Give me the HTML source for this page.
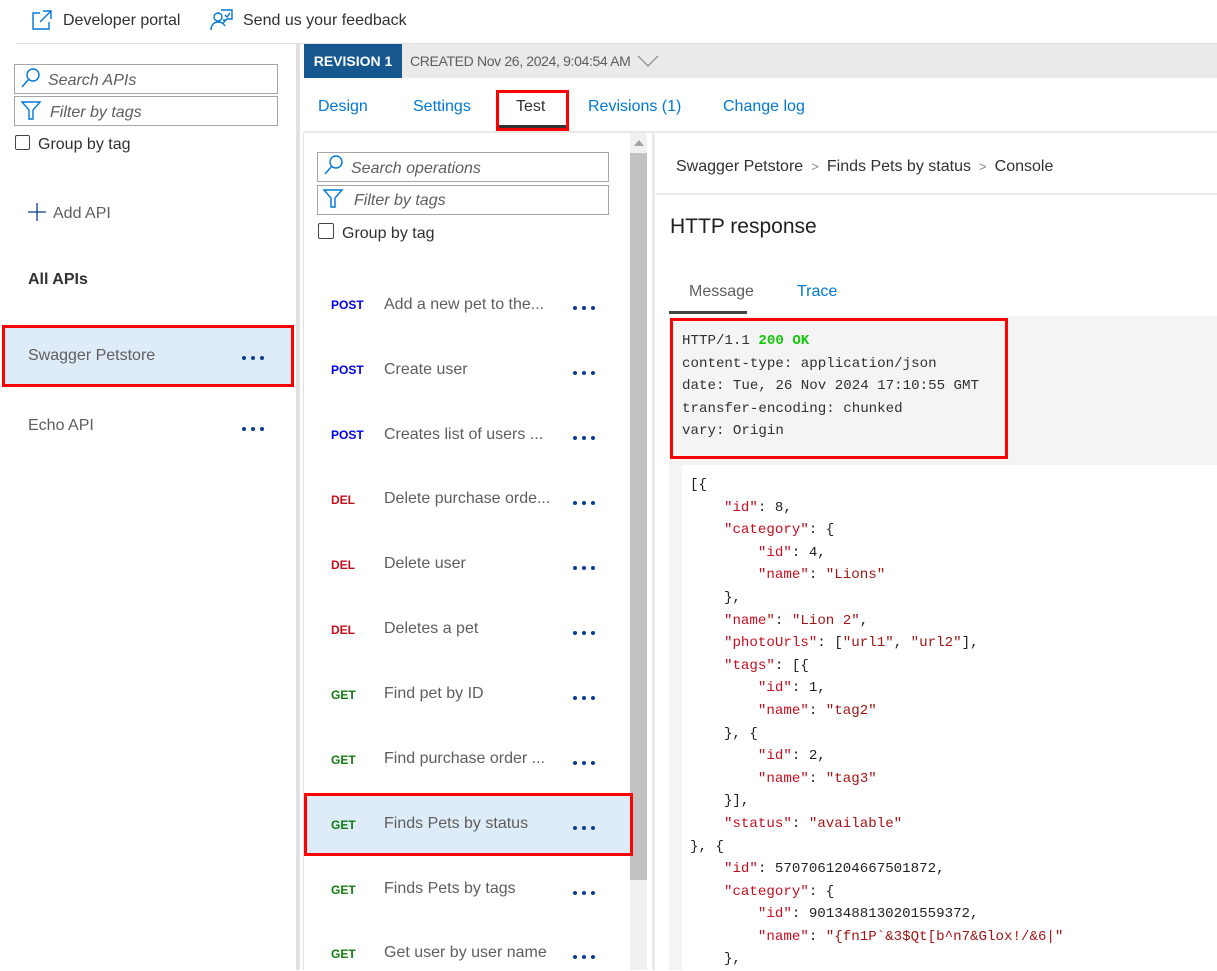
<!DOCTYPE html>
<html><head><meta charset="utf-8"><style>
*{margin:0;padding:0;box-sizing:border-box}
body{width:1217px;height:970px;overflow:hidden;background:#fff;font-family:"Liberation Sans",sans-serif;color:#323130;position:relative}
.a{position:absolute;white-space:nowrap}
.box{position:absolute;border:1px solid #a6a6a6;background:#fff}
.it{font-style:italic;color:#605e5c;font-size:16px}
.lnk{color:#0078d4;font-size:16px}
.dots{position:absolute;width:22px;height:4px;display:flex;justify-content:space-between}
.dots i{display:block;width:4px;height:4px;border-radius:50%;background:#0b3d91}
.m{position:absolute;font-size:12px;font-weight:bold}
.op{position:absolute;font-size:16px;color:#605e5c}
.mono{font-family:"Liberation Mono",monospace;font-size:14.15px;line-height:22.6px;white-space:pre}
.k{color:#c50f1f}
.s{color:#a31515}
</style></head><body>
<!-- top bar -->
<svg class="a" style="left:31px;top:9px" width="22" height="22" viewBox="0 0 22 22" fill="none" stroke="#0078d4" stroke-width="1.4"><path d="M9 4H2v16h16v-7"/><path d="M12 2h8v8M20 2L9 13"/></svg>
<div class="a" style="left:63px;top:12px;font-size:16px">Developer portal</div>
<svg class="a" style="left:210px;top:8px" width="24" height="24" viewBox="0 0 24 24" fill="none" stroke="#0078d4" stroke-width="1.4"><circle cx="8" cy="9" r="4"/><path d="M1 22c0-5 3-8 7-8s6 2 7 4"/><path d="M11 2h11v9h-5l-3 3v-3"/><path d="M15 7l2 2 3-4"/></svg>
<div class="a" style="left:243px;top:12px;font-size:16px">Send us your feedback</div>
<div class="a" style="left:16px;top:43px;width:1201px;height:1px;background:#e1dfdd"></div>

<!-- left pane -->
<div class="box" style="left:14px;top:64px;width:264px;height:30px"></div>
<svg class="a" style="left:20px;top:67px" width="22" height="22" viewBox="0 0 22 22" fill="none" stroke="#0078d4" stroke-width="1.4"><circle cx="13" cy="8" r="6"/><path d="M9 12L2 20"/></svg>
<div class="a it" style="left:48px;top:72px">Search APIs</div>
<div class="box" style="left:14px;top:96px;width:264px;height:30px"></div>
<svg class="a" style="left:20px;top:99px" width="22" height="22" viewBox="0 0 22 22" fill="none" stroke="#0078d4" stroke-width="1.4"><path d="M2 3h18l-7 8v9h-4v-9z"/></svg>
<div class="a it" style="left:50px;top:104px">Filter by tags</div>
<div class="a" style="left:15px;top:135px;width:15px;height:15px;border:1px solid #444;border-radius:2px"></div>
<div class="a" style="left:38px;top:136px;font-size:16px">Group by tag</div>
<svg class="a" style="left:27px;top:202px" width="20" height="20" viewBox="0 0 20 20" stroke="#0b3d91" stroke-width="1.3"><path d="M10 1v18M1 10h18"/></svg>
<div class="a" style="left:53px;top:205px;font-size:16px;color:#605e5c">Add API</div>
<div class="a" style="left:28px;top:271px;font-size:16px;font-weight:bold;color:#323130">All APIs</div>
<div class="a" style="left:2px;top:325px;width:292px;height:62px;background:#deecf9;border:3px solid #f00"></div>
<div class="a" style="left:28px;top:347px;font-size:16px;color:#605e5c">Swagger Petstore</div>
<div class="dots" style="left:242px;top:356px"><i></i><i></i><i></i></div>
<div class="a" style="left:28px;top:417px;font-size:16px;color:#605e5c">Echo API</div>
<div class="dots" style="left:242px;top:427px"><i></i><i></i><i></i></div>
<div class="a" style="left:296px;top:44px;width:4px;height:926px;background:#e1e1e1"></div>

<!-- revision bar -->
<div class="a" style="left:304px;top:44px;width:913px;height:34px;background:#eaeaea"></div>
<div class="a" style="left:304px;top:44px;width:98px;height:34px;background:#16578f;color:#fff;font-weight:bold;font-size:14px;line-height:34px;text-align:center">REVISION 1</div>
<div class="a" style="left:410px;top:53px;font-size:14px;color:#605e5c;letter-spacing:-0.35px">CREATED Nov 26, 2024, 9:04:54 AM</div>
<svg class="a" style="left:637px;top:54px" width="22" height="14" viewBox="0 0 22 14" fill="none" stroke="#8a8886" stroke-width="1.2"><path d="M1 2l10 10L21 2"/></svg>

<!-- tabs -->
<div class="a lnk" style="left:318px;top:98px">Design</div>
<div class="a lnk" style="left:413px;top:98px">Settings</div>
<div class="a" style="left:516px;top:98px;font-size:16px">Test</div>
<div class="a" style="left:498px;top:125px;width:68px;height:3px;background:#333"></div>
<div class="a" style="left:496px;top:90px;width:73px;height:41px;border:3px solid #f00"></div>
<div class="a lnk" style="left:588px;top:98px">Revisions (1)</div>
<div class="a lnk" style="left:723px;top:98px">Change log</div>
<div class="a" style="left:304px;top:131px;width:913px;height:2px;background:#e8e8e8"></div>

<!-- middle pane -->
<div class="a" style="left:303px;top:133px;width:1px;height:837px;background:#e1e1e1"></div>
<div class="a" style="left:630px;top:133px;width:17px;height:837px;background:#f1f1f1"></div>
<div class="a" style="left:634px;top:140px;width:0;height:0;border-left:5px solid transparent;border-right:5px solid transparent;border-bottom:6px solid #a3a3a3"></div>
<div class="a" style="left:630px;top:153px;width:17px;height:727px;background:#c1c1c1"></div>
<div class="a" style="left:652px;top:133px;width:3px;height:837px;background:#eaeaea"></div>

<div class="box" style="left:317px;top:152px;width:292px;height:30px"></div>
<svg class="a" style="left:323px;top:154px" width="22" height="22" viewBox="0 0 22 22" fill="none" stroke="#0078d4" stroke-width="1.4"><circle cx="13" cy="8" r="6"/><path d="M9 12L2 20"/></svg>
<div class="a it" style="left:351px;top:160px">Search operations</div>
<div class="box" style="left:317px;top:185px;width:292px;height:30px"></div>
<svg class="a" style="left:322px;top:187px" width="22" height="22" viewBox="0 0 22 22" fill="none" stroke="#0078d4" stroke-width="1.4"><path d="M2 3h18l-7 8v9h-4v-9z"/></svg>
<div class="a it" style="left:354px;top:192px">Filter by tags</div>
<div class="a" style="left:318px;top:223px;width:16px;height:16px;border:1px solid #444;border-radius:2px"></div>
<div class="a" style="left:342px;top:225px;font-size:16px">Group by tag</div>

<div class="a" style="left:304px;top:793px;width:329px;height:63px;background:#deecf9;border:3px solid #f00"></div>

<div class="m" style="left:331px;top:298px;color:#0000ee">POST</div><div class="op" style="left:384px;top:296px">Add a new pet to the...</div><div class="dots" style="left:573px;top:306px"><i></i><i></i><i></i></div>
<div class="m" style="left:331px;top:363px;color:#0000ee">POST</div><div class="op" style="left:384px;top:361px">Create user</div><div class="dots" style="left:573px;top:371px"><i></i><i></i><i></i></div>
<div class="m" style="left:331px;top:428px;color:#0000ee">POST</div><div class="op" style="left:384px;top:426px">Creates list of users ...</div><div class="dots" style="left:573px;top:436px"><i></i><i></i><i></i></div>
<div class="m" style="left:331px;top:493px;color:#c50f1f">DEL</div><div class="op" style="left:384px;top:490px">Delete purchase orde...</div><div class="dots" style="left:573px;top:501px"><i></i><i></i><i></i></div>
<div class="m" style="left:331px;top:558px;color:#c50f1f">DEL</div><div class="op" style="left:384px;top:555px">Delete user</div><div class="dots" style="left:573px;top:566px"><i></i><i></i><i></i></div>
<div class="m" style="left:331px;top:623px;color:#c50f1f">DEL</div><div class="op" style="left:384px;top:620px">Deletes a pet</div><div class="dots" style="left:573px;top:631px"><i></i><i></i><i></i></div>
<div class="m" style="left:331px;top:688px;color:#107c10">GET</div><div class="op" style="left:384px;top:685px">Find pet by ID</div><div class="dots" style="left:573px;top:696px"><i></i><i></i><i></i></div>
<div class="m" style="left:331px;top:753px;color:#107c10">GET</div><div class="op" style="left:384px;top:750px">Find purchase order ...</div><div class="dots" style="left:573px;top:761px"><i></i><i></i><i></i></div>
<div class="m" style="left:331px;top:818px;color:#107c10">GET</div><div class="op" style="left:384px;top:815px">Finds Pets by status</div><div class="dots" style="left:573px;top:826px"><i></i><i></i><i></i></div>
<div class="m" style="left:331px;top:883px;color:#107c10">GET</div><div class="op" style="left:384px;top:880px">Finds Pets by tags</div><div class="dots" style="left:573px;top:891px"><i></i><i></i><i></i></div>
<div class="m" style="left:331px;top:947px;color:#107c10">GET</div><div class="op" style="left:384px;top:944px">Get user by user name</div><div class="dots" style="left:573px;top:955px"><i></i><i></i><i></i></div>

<!-- right pane -->
<div class="a" style="left:676px;top:158px;font-size:16px;color:#323130">Swagger Petstore <span style="color:#8a8886;font-size:13px">&nbsp;&gt;&nbsp;</span> Finds Pets by status <span style="color:#8a8886;font-size:13px">&nbsp;&gt;&nbsp;</span> Console</div>
<div class="a" style="left:655px;top:193px;width:562px;height:2px;background:#ececec"></div>
<div class="a" style="left:670px;top:215px;font-size:21px;color:#201f1e">HTTP response</div>
<div class="a" style="left:689px;top:283px;font-size:16px;color:#605e5c">Message</div>
<div class="a lnk" style="left:797px;top:283px">Trace</div>
<div class="a" style="left:669px;top:311px;width:78px;height:3px;background:#444"></div>
<div class="a" style="left:669px;top:316px;width:548px;height:654px;background:#f4f4f4"></div>
<div class="a" style="left:670px;top:318px;width:338px;height:141px;border:3px solid #f00"></div>
<div class="a mono" style="left:682px;top:330px;color:#323130">HTTP/1.1 <b style="color:#16c60c">200 OK</b>
content-type: application/json
date: Tue, 26 Nov 2024 17:10:55 GMT
transfer-encoding: chunked
vary: Origin</div>
<div class="a" style="left:682px;top:465px;width:535px;height:505px;background:#fff"></div>
<div class="a mono" style="left:690px;top:474px;color:#222">[{
    <span class="k">"id"</span>: 8,
    <span class="k">"category"</span>: {
        <span class="k">"id"</span>: 4,
        <span class="k">"name"</span>: <span class="s">"Lions"</span>
    },
    <span class="k">"name"</span>: <span class="s">"Lion 2"</span>,
    <span class="k">"photoUrls"</span>: [<span class="s">"url1"</span>, <span class="s">"url2"</span>],
    <span class="k">"tags"</span>: [{
        <span class="k">"id"</span>: 1,
        <span class="k">"name"</span>: <span class="s">"tag2"</span>
    }, {
        <span class="k">"id"</span>: 2,
        <span class="k">"name"</span>: <span class="s">"tag3"</span>
    }],
    <span class="k">"status"</span>: <span class="s">"available"</span>
}, {
    <span class="k">"id"</span>: 5707061204667501872,
    <span class="k">"category"</span>: {
        <span class="k">"id"</span>: 9013488130201559372,
        <span class="k">"name"</span>: <span class="s">"{fn1P`&amp;3$Qt[b^n7&amp;Glox!/&amp;6|"</span>
    },</div>
</body></html>
